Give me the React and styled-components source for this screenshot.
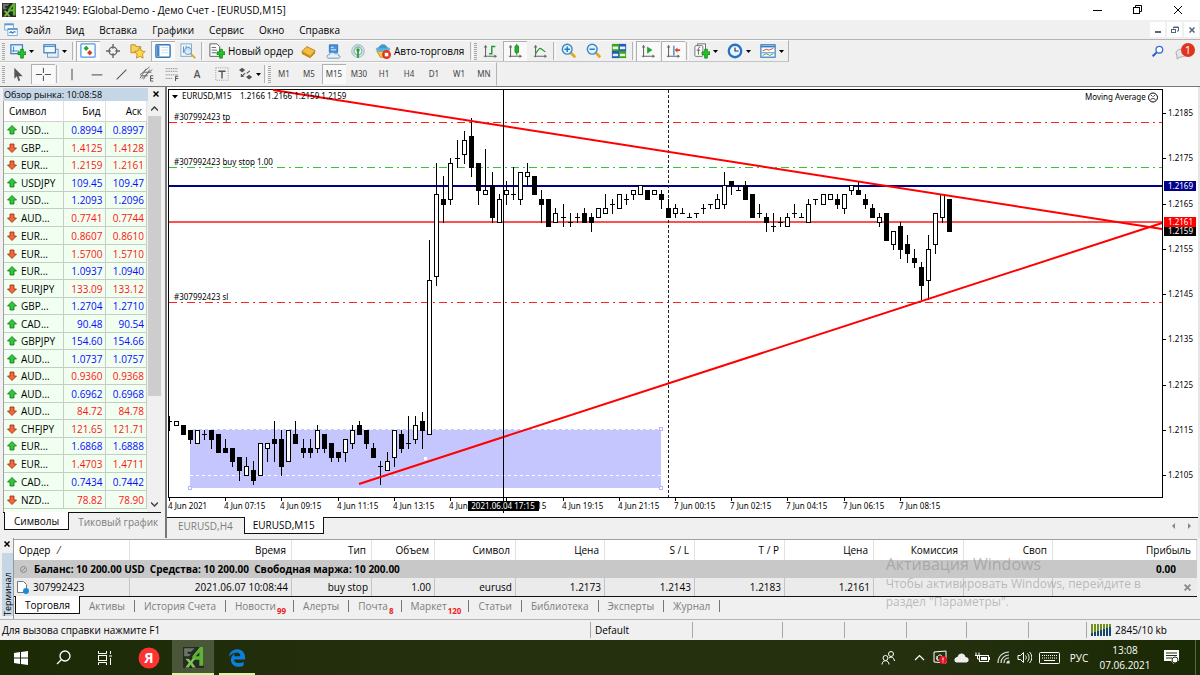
import React from 'react'
import styled, { createGlobalStyle, css } from 'styled-components'
import { FaEdgeLegacy } from 'react-icons/fa'

const GlobalStyle = createGlobalStyle`
  * { box-sizing: border-box; }
  body {
    margin: 0;
    background: #f0f0f0;
    color: #000;
    font-family: "Open Sans", "Noto Sans", sans-serif;
    font-size: 10px;
    line-height: 14px;
  }
  button {
    margin: 0;
    padding: 0;
    border: 0;
    background: none;
    color: inherit;
    font: inherit;
    white-space: nowrap;
  }
  svg { display: block; }
`

const Screen = styled.div`
  display: flex;
  flex-direction: column;
  min-height: 100vh;
`

/* ---------- title and menu ---------- */

const TitleBar = styled.header`
  display: flex;
  align-items: center;
  height: 20px;
  padding: 0 2px;
  background: #fff;
`

const Title = styled.h1`
  flex: 1;
  margin: 0 0 0 4px;
  font-size: 10px;
  font-weight: 400;
`

const WindowButton = styled.button`
  display: flex;
  align-items: center;
  justify-content: center;
  width: 40px;
  height: 20px;
`

const MenuBar = styled.nav`
  display: flex;
  align-items: center;
  gap: 7px;
  height: 20px;
  padding-left: 4px;
  border-bottom: 1px solid #b4b4b4;
`

const MenuItems = styled.div`
  display: flex;
  gap: 15px;
`

const MdiButtons = styled.div`
  display: flex;
  gap: 2px;
  margin-left: auto;
  padding-right: 1px;
`

const MdiButton = styled.button`
  display: flex;
  align-items: center;
  justify-content: center;
  width: 15px;
  height: 15px;
  background: #fff;
`

/* ---------- toolbars ---------- */

const ToolbarRow = styled.div`
  display: flex;
  align-items: stretch;
  height: ${props => props.$height}px;
`

const Tools = styled.div`
  display: flex;
  align-items: center;
  gap: 1px;
  padding-left: 2px;
  border-top: 1px solid #fbfbfb;
  border-right: 1px solid #b4b4b4;
  border-bottom: 1px solid ${props => (props.$last ? '#f0f0f0' : '#c4c4c4')};
`

const Grip = styled.span`
  width: 3px;
  height: 17px;
  background: repeating-linear-gradient(#a8a8a8 0 1px, #f0f0f0 1px 2px);
`

const Divider = styled.span`
  width: 3px;
  height: 18px;
  border-left: 1px solid #b4b4b4;
  border-right: 1px solid #fbfbfb;
`

const Tool = styled.button`
  display: flex;
  align-items: center;
  justify-content: ${props => (props.$start ? 'flex-start' : 'center')};
  gap: 3px;
  width: ${props => props.$width || 24}px;
  height: 20px;
  padding-left: ${props => (props.$start ? 4 : 0)}px;
  ${props => props.$pressed && css`
    background: #f9f9f9;
    box-shadow: inset 1px 1px #b0b0b0;
  `}
`

const TextTool = styled(Tool)`
  color: #555;
  font-weight: 600;
`

const Period = styled(Tool)`
  color: #444;
  font-family: "Noto Sans", sans-serif;
  font-size: 8px;
`

const ToolbarEnd = styled.div`
  display: flex;
  align-items: center;
  gap: 10px;
  margin-left: auto;
  padding-right: 4px;
`

/* ---------- workspace ---------- */

const Workspace = styled.main`
  display: flex;
  flex: 1;
  border-top: 1px solid #777;
`

const MarketWatch = styled.aside`
  display: flex;
  flex-direction: column;
  flex: none;
  width: 165px;
  padding: 0 4px 0 3px;
`

const PanelTitle = styled.div`
  display: flex;
  align-items: center;
  justify-content: space-between;
  height: 14px;
  padding-right: 2px;
`

const PanelName = styled.h2`
  width: 145px;
  margin: 0;
  padding-left: 1px;
  background: #c5d6e6;
  font-size: 9px;
  font-weight: 400;
  line-height: 13px;
`

const QuotesArea = styled.div`
  display: flex;
  flex: 1;
  border-left: 1px solid #a0a0a0;
  background: #f1fff1;
`

const Quotes = styled.table`
  flex: none;
  align-self: flex-start;
  width: 143px;
  table-layout: fixed;
  border-spacing: 0;
  background: #f1fff1;

  th {
    height: 21px;
    padding: 0 4px 0 5px;
    background: #fff;
    border-right: 1px solid #e2e2e2;
    border-bottom: 1px solid #d0d0d0;
    font-weight: 400;
    text-align: right;
  }
  th:first-child { width: 60px; text-align: left; }
  td {
    height: 17px;
    padding: 0 2px;
    border-right: 1px solid #c8ccc8;
    border-bottom: 1px solid #c8ccc8;
    line-height: 12px;
    text-align: right;
  }
  tbody tr:nth-child(even) td, tbody tr:nth-child(7n) td { height: 18px; }
`

const QuoteRow = styled.tr`
  color: ${props => (props.$up ? '#0a0aff' : '#ff1414')};
`

const SymbolCell = styled.div`
  display: flex;
  align-items: center;
  gap: 4px;
  padding-left: 1px;
  color: #000;
`

const ScrollBar = styled.div`
  display: flex;
  flex-direction: column;
  align-items: center;
  flex: 1;
  background: #f0f0f0;
`

const ScrollButton = styled.button`
  display: flex;
  align-items: center;
  justify-content: center;
  width: 13px;
  height: 15px;
`

const ScrollThumb = styled.div`
  width: 13px;
  height: 280px;
  margin-bottom: auto;
  background: #cdcdcd;
`

const TabRow = styled.div`
  display: flex;
  height: ${props => props.$height || 18}px;
  border-top: 1px solid #111;
`

const Tab = styled.button`
  height: 100%;
  padding: 0 ${props => props.$pad || 8}px;
  color: #7d7d7d;
  ${props => props.$active && css`
    margin-top: -1px;
    background: #fff;
    color: #000;
    border: 1px solid #111;
    border-top: 0;
    height: calc(100% + 1px);
  `}
`

const WatchTabs = styled(TabRow)`
  margin-bottom: 8px;
  padding-left: 1px;
`

const ChartPane = styled.section`
  flex: 1;
  min-width: 0;
  border-left: 2px solid #777;
  border-right: 2px solid #e6e6e6;
`

const ChartSvg = styled.svg`
  width: 100%;
  height: auto;
  background: #fff;
  font-family: "Noto Sans", sans-serif;
  font-size: 8px;
`

const TabScroll = styled.div`
  display: flex;
  align-items: center;
  gap: 12px;
  margin-left: auto;
  padding-right: 6px;
`

/* ---------- terminal ---------- */

const Terminal = styled.section`
  position: relative;
  display: flex;
  height: 82px;
  border-bottom: 1px solid #b4b4b4;
`

const TerminalSide = styled.div`
  display: flex;
  flex-direction: column;
  align-items: center;
  width: 13px;
  padding: 3px 0 3px 1px;
  gap: 6px;
`

const TerminalName = styled.h2`
  flex: 1;
  width: 11px;
  margin: 0;
  background: #c5d6e6;
  font-size: 9px;
  font-weight: 400;
  line-height: 11px;
  writing-mode: vertical-rl;
  transform: rotate(180deg);
  white-space: nowrap;
`

const TerminalBody = styled.div`
  flex: 1;
  min-width: 0;
  margin-right: 3px;
  padding-top: 1px;
  border-left: 1px solid #999;
`

const Orders = styled.table`
  width: 100%;
  table-layout: fixed;
  border-spacing: 0;
  border-top: 1px solid #a0a0a0;

  th {
    height: 20px;
    padding: 0 5px;
    background: #fff;
    border-right: 1px solid #e2e2e2;
    font-weight: 400;
    text-align: right;
  }
  th:first-child, td:first-child { text-align: left; }
  td {
    height: 18px;
    padding: 0 3px;
    background: #ebebeb;
    border-right: 1px solid #c4c4c4;
    text-align: right;
  }
  tr.balance td {
    background: #c8c8c8;
    border: 0;
    font-weight: 700;
  }
  tr.balance td:last-child { padding-right: 21px; }
  td:last-child { padding-right: 6px; border: 0; }
`

const OrderLabel = styled.div`
  display: flex;
  align-items: center;
  gap: ${props => props.$gap}px;
  padding-left: ${props => props.$indent || 0}px;
  white-space: pre;
`

const TerminalTabs = styled(TabRow)`
  align-items: center;
  padding-left: 1px;
`

const SplitTab = styled(Tab)`
  display: flex;
  align-items: center;
  height: 12px;
  border-right: 1px solid #777;
`

const Count = styled.span`
  align-self: flex-end;
  margin: 0 -2px -6px 1px;
  color: #f02020;
  font-size: 8px;
  font-weight: 700;
`

const Watermark = styled.div`
  position: absolute;
  top: 15px;
  right: 59px;
  color: rgba(140, 140, 140, 0.55);
  font-size: 12px;
  line-height: 18px;
  pointer-events: none;

  strong {
    display: block;
    font-size: 16px;
    font-weight: 400;
    line-height: 22px;
  }
`

const StatusBar = styled.footer`
  display: flex;
  align-items: center;
  height: 20px;
  padding-left: 1px;
`

const StatusCell = styled.div`
  display: flex;
  align-items: center;
  gap: 4px;
  flex: ${props => (props.$width ? 'none' : 1)};
  width: ${props => (props.$width ? props.$width + 'px' : 'auto')};
  height: 16px;
  padding-left: ${props => (props.$width ? 4 : 1)}px;
  border-left: ${props => (props.$width ? '1px solid #a8a8a8' : '0')};
`

/* ---------- taskbar ---------- */

const TaskBar = styled.footer`
  display: flex;
  height: 35px;
  background: linear-gradient(90deg, #1c2a06, #25300f 40%, #25300f 75%, #1a2a04);
  color: #fff;
`

const TaskButton = styled.button`
  display: flex;
  align-items: center;
  justify-content: center;
  width: ${props => props.$width}px;
  ${props => props.$active && css`background: #4a5638;`}
`

// a running program has a light line below its icon
const RunningButton = styled(TaskButton)`
  padding-top: 2px;
  margin: 0 ${props => props.$gap || 0}px;
  border-bottom: 2px solid #dcf3a0;
`

const Tray = styled.div`
  display: flex;
  margin-left: auto;
  padding-right: 8px;
  border-right: 1px solid #5b6548;
  margin-right: 4px;
`

const Clock = styled.time`
  display: flex;
  flex-direction: column;
  justify-content: center;
  width: 60px;
  line-height: 15px;
  text-align: center;
`

/* ---------- icons ---------- */

const Icon = ({ size = 16, children }) => (
  <svg width={size} height={size} viewBox="0 0 18 18" fill="none" aria-hidden="true">{children}</svg>
)

const Logo = ({ size }) => (
  <Icon size={size}>
    <rect width="18" height="18" fill="#262a22" />
    <path d="M1 1h9L7 4H4v2h3L5 8H1z" fill="#6d7568" />
    <path d="M17.500 0h-3L8 8v3h6v5h3.500zM14 4.500V8h-3z" fill="#5fb236" fillRule="evenodd" />
    <path d="M2 10h3l1.500 2L8 10h2.500L8 13.500l3 4H8L6.500 15 5 17.500H2l3-4z" fill="#7cc451" />
  </Icon>
)

const Plus = () => <path d="M12 7h3v3h3v3h-3v4h-3v-4H9v-3h3z" fill="#23c52a" stroke="#128a18" />

const Axes = () => (
  <>
    <path d="M4 4v12M2 15h13" stroke="#666" strokeWidth="1.200" />
    <path d="M4 2l2 3H2zM17 15l-3-2v4z" fill="#666" />
  </>
)

const Lens = ({ minus }) => (
  <Icon>
    <path d="M11 11l5 5" stroke="#e0a721" strokeWidth="3" />
    <circle cx="7" cy="7" r="5.500" fill="#dff2ff" stroke="#3c87c8" strokeWidth="1.6" />
    <path d={minus ? 'M4 7h6' : 'M4 7h6M7 4v6'} stroke="#2476b8" strokeWidth="1.6" />
  </Icon>
)

const icons = {
  mdi: <Icon size={14}><rect x="1" y="1" width="11" height="8" fill="#fff" stroke="#5c9ad2" /><path d="M1 2h11" stroke="#5c9ad2" strokeWidth="2" /><rect x="5" y="7" width="12" height="9" fill="#fff" stroke="#5c9ad2" /><path d="M5 8h12M7 13l2-2 2 2 2-2 2 1" stroke="#3379bb" strokeWidth="1.4" /></Icon>,
  newChart: <Icon><rect x="1" y="2" width="13" height="10" fill="#e8f4ff" stroke="#3b82c1" strokeWidth="1.4" /><path d="M4 4v6M2 9h8" stroke="#3b82c1" /><Plus /></Icon>,
  profiles: <Icon><rect x="5" y="7" width="12" height="9" fill="#e8f1fa" stroke="#6c94b8" /><rect x="1" y="2" width="13" height="9" fill="#f3faff" stroke="#3b82c1" strokeWidth="1.4" /><path d="M1 4h13" stroke="#3b82c1" /></Icon>,
  watch: <Icon><rect x="1" y="1" width="16" height="15" rx="1" fill="#fff" stroke="#4a9ae0" strokeWidth="1.4" /><path d="M7 3l3 3-3 3-3-3z" fill="#24a52c" /><path d="M11 8l3 3-3 3-3-3z" fill="#e03a20" /></Icon>,
  cross: <Icon size={14}><circle cx="9" cy="9" r="5" stroke="#666" strokeWidth="1.8" /><path d="M9 0v6M9 12v6M0 9h6M12 9h6" stroke="#666" strokeWidth="1.8" /></Icon>,
  navigator: <Icon><path d="M1 2h5l1 2h5v7H1z" fill="#f4cf62" stroke="#bb8b1e" /><path d="M11 5l2 4 4 .5-3 3 .8 4.500-3.800-2-3.800 2 .8-4.500-3-3 4-.5z" fill="#ffd84a" stroke="#c48b15" /></Icon>,
  terminal: <Icon><rect x="1" y="2" width="16" height="14" rx="1" fill="#fff" stroke="#3379bb" strokeWidth="1.6" /><rect x="2" y="3" width="3" height="12" fill="#4687c7" /><path d="M7 5h8M7 8h8M7 11h8" stroke="#c5d8ea" /></Icon>,
  tester: <Icon><rect x="1" y="1" width="12" height="14" fill="#eef6fc" stroke="#7ba5c9" /><path d="M4 4v7M7 3v6M10 4v5" stroke="#477caf" /><circle cx="9" cy="9" r="4" fill="#cfe9fb" fillOpacity=".8" stroke="#5c98c8" /><path d="M12 12l5 5" stroke="#d9a126" strokeWidth="2" /></Icon>,
  order: <Icon><path d="M1 1h8l3 3v11H1z" fill="#fff" stroke="#555" /><path d="M3 5h5M3 8h6M3 11h5" stroke="#555" /><Plus /></Icon>,
  book: <Icon size={15}><path d="M1 9l6-6 10 5-6 7z" fill="#f2bd3f" stroke="#a97412" /><path d="M1 9v3l10 5 6-6V8l-6 7z" fill="#c98a1c" /></Icon>,
  server: <Icon size={15}><path d="M4 1h10v9H4z" fill="#4a95e0" stroke="#2868b0" /><path d="M6 4h3M6 7h6" stroke="#fff" /><path d="M3 17c-3 0-2-5 1-4 1-4 6-3 7-1 3-1 5 1 4 2 3 0 2 3 0 3z" fill="#e6f0fa" stroke="#5c8ab8" /></Icon>,
  signal: <Icon size={16}><circle cx="9" cy="9" r="7" stroke="#a9c3d4" strokeWidth="1.5" /><circle cx="9" cy="9" r="4.500" stroke="#7fb9a0" strokeWidth="1.5" /><circle cx="9" cy="8" r="2" fill="#2d9b45" /><path d="M9 8v9" stroke="#2d9b45" strokeWidth="2" /></Icon>,
  auto: <Icon><path d="M2 9h14l-4 7H6z" fill="#f4c847" stroke="#bb8b1e" /><ellipse cx="9" cy="7" rx="8" ry="3" fill="#5cb0e0" /><path d="M4 6c1-6 9-6 10 0z" fill="#4397cf" /><circle cx="13" cy="13" r="5" fill="#e4341d" /><rect x="11" y="11" width="4" height="4" fill="#fff" /></Icon>,
  bars: <Icon><Axes /><path d="M8 12h3V4h4M11 4v9" stroke="#1c9b28" strokeWidth="1.600" /></Icon>,
  candles: <Icon><Axes /><path d="M11 1v13" stroke="#128a18" /><rect x="9" y="3" width="4" height="8" rx="1" fill="#20b52c" stroke="#128a18" /></Icon>,
  line: <Icon><Axes /><path d="M4 12c4-6 5-7 7-5l4 3" stroke="#1c9b28" strokeWidth="1.3" /></Icon>,
  tile: <Icon><rect x="1" y="1" width="8" height="8" fill="#3ca51c" /><rect x="9" y="1" width="8" height="8" fill="#2259c2" /><rect x="1" y="9" width="8" height="8" fill="#2259c2" /><rect x="9" y="9" width="8" height="8" fill="#3ca51c" /><path d="M2 4h6v3H2zM10 4h6v3h-6zM2 12h6v3H2zM10 12h6v3h-6z" fill="#e4f3df" /></Icon>,
  scroll: <Icon><Axes /><path d="M8 4l6 4-6 4z" fill="#20a52c" /></Icon>,
  shift: <Icon><Axes /><path d="M10 3v11" stroke="#3379bb" strokeWidth="1.4" /><path d="M11 8l3-3v2h3v2h-3v2z" fill="#d84120" /></Icon>,
  indicators: <Icon><rect x="4" y="1" width="9" height="11" fill="#fff" stroke="#666" /><rect x="1" y="3" width="9" height="12" rx="1" fill="#fff" stroke="#666" /><path d="M7 5c-3-1-2 3-2 8M3 8h4" stroke="#555" /><Plus /></Icon>,
  clock: <Icon><circle cx="9" cy="9" r="7" fill="#e8f4ff" stroke="#2672c4" strokeWidth="2.6" /><path d="M9 5v4h4" stroke="#335" strokeWidth="1.3" /></Icon>,
  template: <Icon><rect x="1" y="2" width="16" height="14" fill="#fff" stroke="#3b82c1" strokeWidth="1.4" /><path d="M1 4h16" stroke="#3b82c1" strokeWidth="2" /><path d="M3 9l4-2 3 1 5-2" stroke="#c24430" /><path d="M2 11h14" stroke="#3b82c1" /><path d="M3 14l4-2 4 2 4-2" stroke="#3a9a48" /></Icon>,
  find: <Icon size={12}><path d="M7 11l-6 6" stroke="#2c59c4" strokeWidth="3" /><circle cx="11" cy="7" r="5" stroke="#3b6cd6" strokeWidth="2" fill="#fff" /></Icon>,
  cursor: <Icon size={15}><path d="M4 1v13l3-3 2 6 2-1-2-5h5z" fill="#555" /></Icon>,
  crosshair: <Icon><path d="M9.500 2v6M9.500 11v6M1 9.500h7M11 9.500h7" stroke="#555" strokeWidth="1.200" /></Icon>,
  vline: <Icon><path d="M9 3v13" stroke="#555" strokeWidth="1.200" /></Icon>,
  hline: <Icon><path d="M3 10h12" stroke="#555" strokeWidth="1.200" /></Icon>,
  trend: <Icon><path d="M3 15L14 4" stroke="#555" strokeWidth="1.200" /></Icon>,
  channel: <Icon><path d="M1 10L12 1M3 14L15 4M1 14L8 3M5 15l7-11M2 11h8M5 7h9" stroke="#666" /><path d="M16 11h-3v6h3M13 14h3" stroke="#444" /></Icon>,
  fibo: <Icon><path d="M2 3h13M2 6h13M2 10h13M2 14h8" stroke="#666" strokeDasharray="1 1" /><path d="M16 11.500h-3V17M13 14h3" stroke="#444" /></Icon>,
  label: <Icon><rect x="2" y="2" width="14" height="14" stroke="#888" strokeDasharray="1 1.500" /><path d="M5 6h8M9 6v8" stroke="#555" strokeWidth="1.600" /></Icon>,
  arrows: <Icon size={14}><path d="M0 4l4-3 4 3-4 3zM9 13l4-3 4 3-4 3z" fill="#555" /><path d="M3 12l5-4M3 9v3h3M10 8l4-3" stroke="#555" strokeWidth="1.400" /></Icon>,
  minimize: <svg width="10" height="10"><path d="M0 5.500h9" stroke="#000" /></svg>,
  restore: <svg width="10" height="10" fill="none" stroke="#000"><rect x=".5" y="2.500" width="6" height="6" /><path d="M2.500 2V.5h6v6H7" /></svg>,
  close: <svg width="10" height="10"><path d="M1 1l8 8M9 1l-8 8" stroke="#000" /></svg>,
}

const Caret = () => <svg width="5" height="3" aria-hidden="true"><path d="M0 0h5L2.500 3z" fill="#000" /></svg>
const SmallX = ({ color = '#000', size = 6 }) => (
  <svg width={size} height={size} viewBox="0 0 6 6" aria-hidden="true"><path d="M.5.5l5 5M5.500.5l-5 5" stroke={color} strokeWidth="1.5" /></svg>
)

const Direction = ({ up }) => (
  <svg width="10" height="10" viewBox="0 0 10 10" aria-hidden="true">
    {up
      ? <path d="M5 .5L9.500 5H7v4H3V5H.5z" fill="#2fc63a" stroke="#14701b" strokeWidth=".8" />
      : <path d="M5 9.500L9.500 5H7V1H3v4H.5z" fill="#f2683c" stroke="#9c2a0e" strokeWidth=".8" />}
  </svg>
)

/* ---------- data ---------- */

const menu = ['Файл', 'Вид', 'Вставка', 'Графики', 'Сервис', 'Окно', 'Справка']
const periods = ['M1', 'M5', 'M15', 'M30', 'H1', 'H4', 'D1', 'W1', 'MN']

const quotes = [
  ['USD...', '0.8994', '0.8997', 1],
  ['GBP...', '1.4125', '1.4128', 0],
  ['EUR...', '1.2159', '1.2161', 0],
  ['USDJPY', '109.45', '109.47', 1],
  ['USD...', '1.2093', '1.2096', 1],
  ['AUD...', '0.7741', '0.7744', 0],
  ['EUR...', '0.8607', '0.8610', 0],
  ['EUR...', '1.5700', '1.5710', 0],
  ['EUR...', '1.0937', '1.0940', 1],
  ['EURJPY', '133.09', '133.12', 0],
  ['GBP...', '1.2704', '1.2710', 1],
  ['CAD...', '90.48', '90.54', 1],
  ['GBPJPY', '154.60', '154.66', 1],
  ['AUD...', '1.0737', '1.0757', 1],
  ['AUD...', '0.9360', '0.9368', 0],
  ['AUD...', '0.6962', '0.6968', 1],
  ['AUD...', '84.72', '84.78', 0],
  ['CHFJPY', '121.65', '121.71', 0],
  ['EUR...', '1.6868', '1.6888', 1],
  ['EUR...', '1.4703', '1.4711', 0],
  ['CAD...', '0.7434', '0.7442', 1],
  ['NZD...', '78.82', '78.90', 0],
]

// open, high, low, close in pips above 1.2100
const candles = [
  [17, 18, 15, 17], [16, 17, 16, 17], [16, 16, 14, 14], [15, 15, 12, 13], [12, 15, 12, 15], [14, 15, 13, 14],
  [15, 15, 11, 13], [14, 14, 10, 10], [11, 13, 10, 10], [11, 11, 7, 8], [9, 9, 4, 6], [5, 9, 5, 7],
  [6, 8, 3, 4], [5, 12, 5, 12], [11, 12, 8, 12], [13, 17, 8, 12], [13, 15, 5, 7], [8, 15, 8, 15],
  [14, 17, 12, 12], [11, 13, 9, 10], [11, 13, 9, 10], [11, 16, 10, 15], [14, 14, 10, 11], [12, 12, 8, 9],
  [10, 10, 8, 9], [10, 13, 8, 13], [12, 16, 11, 15], [16, 17, 14, 14], [15, 15, 11, 12], [11, 12, 9, 9],
  [7, 8, 3, 7], [6, 10, 6, 8], [9, 15, 7, 15], [14, 15, 10, 11], [12, 18, 11, 12], [13, 18, 12, 16],
  [17, 19, 11, 15], [14, 57, 14, 48], [49, 74, 47, 67], [66, 71, 61, 65], [66, 75, 65, 74], [75, 79, 73, 75],
  [76, 81, 74, 79], [80, 84, 71, 73], [74, 74, 65, 68], [67, 77, 67, 68], [69, 72, 61, 62], [61, 67, 61, 66],
  [67, 70, 65, 68], [67, 73, 66, 67], [66, 72, 65, 72], [71, 74, 69, 72], [71, 71, 67, 67], [66, 68, 61, 65],
  [66, 66, 60, 60], [61, 64, 61, 63], [62, 65, 60, 62], [61, 63, 60, 61], [62, 63, 61, 62], [63, 64, 61, 61],
  [62, 63, 59, 61], [62, 64, 62, 64], [63, 67, 63, 64], [65, 66, 63, 65], [64, 67, 64, 67], [66, 67, 65, 66],
  [67, 68, 66, 68], [67, 69, 67, 69], [68, 68, 66, 66], [67, 68, 67, 68], [67, 68, 64, 66], [64, 66, 62, 62],
  [63, 65, 62, 64], [63, 64, 63, 63], [62, 63, 62, 62], [63, 63, 62, 63], [64, 65, 63, 64], [65, 65, 64, 65],
  [64, 67, 64, 66], [65, 72, 64, 69], [70, 70, 67, 69], [68, 69, 68, 68], [69, 70, 66, 66], [67, 67, 62, 62],
  [63, 65, 62, 63], [62, 63, 59, 61], [60, 63, 59, 60], [61, 62, 60, 61], [60, 63, 60, 62], [63, 65, 62, 63],
  [62, 63, 62, 62], [61, 66, 61, 65], [66, 66, 65, 66], [65, 67, 65, 67], [66, 67, 66, 67], [66, 67, 64, 65],
  [64, 67, 63, 67], [68, 69, 67, 69], [68, 70, 67, 67], [66, 67, 64, 65], [64, 65, 62, 62], [61, 63, 60, 62],
  [63, 63, 57, 57], [56, 59, 55, 59], [60, 61, 53, 55], [56, 58, 52, 54], [53, 55, 51, 52], [51, 52, 44, 47],
  [48, 58, 44, 55], [56, 63, 54, 63], [62, 67, 61, 67], [66, 66, 59, 59],
]

const times = ['4 Jun 2021', '4 Jun 07:15', '4 Jun 09:15', '4 Jun 11:15', '4 Jun 13:15', '4 Jun 15:15', '4 Jun 17:15',
  '4 Jun 19:15', '4 Jun 21:15', '7 Jun 00:15', '7 Jun 02:15', '7 Jun 04:15', '7 Jun 06:15', '7 Jun 08:15']

const levels = [85, 75, 65, 55, 45, 35, 25, 15, 5]

const columns = [
  ['Ордер', 116, '307992423'], ['Время', 162, '2021.06.07 10:08:44'], ['Тип', 80, 'buy stop'],
  ['Объем', 63, '1.00'], ['Символ', 81, 'eurusd'], ['Цена', 89, '1.2173'], ['S / L', 90, '1.2143'],
  ['T / P', 90, '1.2183'], ['Цена', 89, '1.2161'], ['Комиссия', 90, ''], ['Своп', 89, ''], ['Прибыль', 0, ''],
]

const terminalTabs = [['Активы'], ['История Счета'], ['Новости', 99], ['Алерты'], ['Почта', 8], ['Маркет', 120],
  ['Статьи'], ['Библиотека'], ['Эксперты'], ['Журнал']]

const candleX = i => Math.round(169 + i * 7.027)
const priceY = pips => Math.round(475 - (pips - 5) * 4.525)

/* ---------- chart ---------- */

function Candle({ index, data }) {
  const [open, high, low, close] = data
  const x = candleX(index)
  const top = priceY(Math.max(open, close))
  const height = priceY(Math.min(open, close)) - top
  const left = index === 0 ? 0 : 2
  return (
    <g>
      <path d={`M${x + 0.5} ${priceY(high)}V${priceY(low) + 1}`} stroke="#000" />
      {height === 0
        ? <path d={`M${x - left} ${top + 0.5}h${left + 3}`} stroke="#000" />
        : <rect x={x - 1.5} y={top + 0.5} width="4" height={height} fill={close > open ? '#fff' : '#000'} stroke="#000" />}
    </g>
  )
}

function PriceTag({ y, color, children }) {
  return (
    <g>
      <rect x="1164" y={y - 5} width="32" height="10" fill={color} />
      <text x="1168" y={y + 3} fill="#fff">{children}</text>
    </g>
  )
}

function Chart() {
  return (
    <ChartSvg viewBox="167 87 1031 430" role="img" aria-label="EURUSD,M15">
      <rect x="168.5" y="89.5" width="994" height="408" fill="#fff" stroke="#000" />
      <rect x="190" y="429" width="471" height="59" fill="#c6c6ff" />
      <path d="M190 429.500h471M190 475.500h471" stroke="#fff" strokeDasharray="3 3" />
      <g fill="none">
        <path d="M169 122.500h993M169 302.500h993" stroke="#ff2020" strokeDasharray="8 4 2 4" />
        <path d="M169 167.500h993" stroke="#35c435" strokeDasharray="8 4 2 4" />
        <path d="M169 186h993" stroke="#00008b" strokeWidth="2" />
        <path d="M169 222h993" stroke="#ff5050" strokeWidth="2" />
        <path d="M668.500 90v407" stroke="#222" strokeWidth="1" strokeDasharray="3 2" />
      </g>
      {candles.map((data, i) => <Candle key={i} index={i} data={data} />)}
      <path d="M273 90L1162 229M359 484L1162 223" stroke="#f00" strokeWidth="2" fill="none" />
      <g fill="#fff" stroke="#b4b4ff">
        <rect x="188.500" y="486.500" width="3" height="3" />
        <rect x="659.500" y="427.500" width="3" height="3" />
        <rect x="659.500" y="486.500" width="3" height="3" />
        <rect x="424.500" y="457.500" width="2" height="2" stroke="#fff" />
      </g>

      <path d="M172 95h6l-3 3.500z" />
      <text x="182" y="99">EURUSD,M15</text>
      <text x="240" y="99">1.2166 1.2166 1.2159 1.2159</text>
      <text x="1085" y="100">Moving Average</text>
      <g fill="none" stroke="#000">
        <circle cx="1153" cy="97.500" r="4.500" />
        <path d="M1151 95l1.500 1.500M1155 95l-1.500 1.500M1150.500 100c1-2 4-2 5 0" strokeWidth=".8" />
      </g>
      <text x="174" y="120">#307992423 tp</text>
      <text x="174" y="165">#307992423 buy stop 1.00</text>
      <text x="174" y="300">#307992423 sl</text>

      {levels.map(level => (
        <g key={level}>
          <path d={`M1163 ${priceY(level) + 0.5}h3`} stroke="#000" />
          <text x="1168" y={priceY(level) + 3}>{(1.21 + level / 10000).toFixed(4)}</text>
        </g>
      ))}
      {times.map((time, i) => (
        <g key={time}>
          <path d={`M${candleX(i * 8) + 0.5} 498v3`} stroke="#000" />
          <text x={candleX(i * 8) - 1} y="509">{time}</text>
        </g>
      ))}
      <PriceTag y={186} color="#00008b">1.2169</PriceTag>
      <PriceTag y={231} color="#000">1.2159</PriceTag>
      <PriceTag y={222} color="#f00">1.2161</PriceTag>
      <path d="M503.500 90v423" stroke="#000" />
      <rect x="468" y="501" width="71" height="10" />
      <text x="503" y="509" fill="#fff" textAnchor="middle">2021.06.04 17:15</text>
    </ChartSvg>
  )
}

const ToolWithMenu = ({ width = 32, label, children }) => (
  <Tool $start $width={width} aria-label={label}>{children}<Caret /></Tool>
)

function Toolbars() {
  return (
    <>
      <ToolbarRow $height={22}>
        <Tools>
          <Grip />
          <ToolWithMenu label="Новый график">{icons.newChart}</ToolWithMenu>
          <ToolWithMenu label="Профили">{icons.profiles}</ToolWithMenu>
          <Divider />
          <Tool $pressed aria-label="Обзор рынка">{icons.watch}</Tool>
          <Tool aria-label="Окно данных">{icons.cross}</Tool>
          <Tool aria-label="Навигатор">{icons.navigator}</Tool>
          <Tool $pressed aria-label="Терминал">{icons.terminal}</Tool>
          <Tool aria-label="Тестер стратегий">{icons.tester}</Tool>
          <Divider />
          <Tool $start $width={90}>{icons.order}Новый ордер</Tool>
          <Tool aria-label="Редактор">{icons.book}</Tool>
          <Tool aria-label="Сервер">{icons.server}</Tool>
          <Tool aria-label="Сигналы">{icons.signal}</Tool>
          <Tool $start $width={98}>{icons.auto}Авто-торговля</Tool>
          <Divider />
          <Grip />
          <Tool aria-label="Бары">{icons.bars}</Tool>
          <Tool $pressed aria-label="Свечи">{icons.candles}</Tool>
          <Tool aria-label="Линия">{icons.line}</Tool>
          <Divider />
          <Tool aria-label="Увеличить"><Lens /></Tool>
          <Tool aria-label="Уменьшить"><Lens minus /></Tool>
          <Tool aria-label="Окна мозаикой">{icons.tile}</Tool>
          <Divider />
          <Tool $pressed aria-label="Автопрокрутка">{icons.scroll}</Tool>
          <Tool $pressed aria-label="Сдвиг графика">{icons.shift}</Tool>
          <Divider />
          <ToolWithMenu label="Индикаторы">{icons.indicators}</ToolWithMenu>
          <ToolWithMenu label="Периоды">{icons.clock}</ToolWithMenu>
          <ToolWithMenu label="Шаблоны">{icons.template}</ToolWithMenu>
        </Tools>
        <ToolbarEnd>
          <button aria-label="Поиск">{icons.find}</button>
          <button aria-label="Уведомления">
            <svg width="22" height="20" viewBox="0 0 22 20">
              <path d="M2 12c0-5 10-5 11-1 0 4-4 5-7 5l-3 2v-3z" fill="#e5e5e5" stroke="#aaa" />
              <circle cx="14" cy="9" r="7" fill="#e03420" />
              <text x="14" y="13" textAnchor="middle" fontSize="11" fill="#fff">1</text>
            </svg>
          </button>
        </ToolbarEnd>
      </ToolbarRow>
      <ToolbarRow $height={24}>
        <Tools $last>
          <Grip />
          <Tool aria-label="Курсор">{icons.cursor}</Tool>
          <Tool $pressed aria-label="Перекрестие">{icons.crosshair}</Tool>
          <Divider />
          <Tool aria-label="Вертикальная линия">{icons.vline}</Tool>
          <Tool aria-label="Горизонтальная линия">{icons.hline}</Tool>
          <Tool aria-label="Трендовая линия">{icons.trend}</Tool>
          <Tool aria-label="Канал">{icons.channel}</Tool>
          <Tool aria-label="Фибоначчи">{icons.fibo}</Tool>
          <TextTool aria-label="Текст">A</TextTool>
          <Tool aria-label="Метка">{icons.label}</Tool>
          <ToolWithMenu width={28} label="Стрелки">{icons.arrows}</ToolWithMenu>
          <Divider />
          <Grip />
          {periods.map(name => <Period key={name} $pressed={name === 'M15'}>{name}</Period>)}
        </Tools>
      </ToolbarRow>
    </>
  )
}

function MarketWatchPanel() {
  return (
    <MarketWatch>
      <PanelTitle>
        <PanelName>Обзор рынка: 10:08:58</PanelName>
        <button aria-label="Закрыть"><SmallX /></button>
      </PanelTitle>
      <QuotesArea>
        <Quotes>
          <thead>
            <tr><th>Символ</th><th>Бид</th><th>Аск</th></tr>
          </thead>
          <tbody>
            {quotes.map(([symbol, bid, ask, up], i) => (
              <QuoteRow key={i} $up={up}>
                <td><SymbolCell><Direction up={up} />{symbol}</SymbolCell></td>
                <td>{bid}</td>
                <td>{ask}</td>
              </QuoteRow>
            ))}
          </tbody>
        </Quotes>
        <ScrollBar>
          <ScrollButton aria-label="Вверх"><svg width="7" height="5"><path d="M0 4.500l3.500-3.500L7 4.500" fill="none" stroke="#444" strokeWidth="1.5" /></svg></ScrollButton>
          <ScrollThumb />
          <ScrollButton aria-label="Вниз"><svg width="7" height="5"><path d="M0 .5L3.500 4 7 .5" fill="none" stroke="#444" strokeWidth="1.5" /></svg></ScrollButton>
        </ScrollBar>
      </QuotesArea>
      <WatchTabs>
        <Tab $active $pad={9}>Символы</Tab>
        <Tab $pad={9}>Тиковый график</Tab>
      </WatchTabs>
    </MarketWatch>
  )
}

function TerminalPanel() {
  return (
    <Terminal>
      <TerminalSide>
        <button aria-label="Закрыть"><SmallX /></button>
        <TerminalName>Терминал</TerminalName>
      </TerminalSide>
      <TerminalBody>
        <Orders>
          <colgroup>
            {columns.map(([, width], i) => <col key={i} width={width || undefined} />)}
          </colgroup>
          <thead>
            <tr>{columns.map(([name], i) => <th key={i}>{name}{i === 0 && <>&nbsp;&nbsp; ⁄</>}</th>)}</tr>
          </thead>
          <tbody>
            <tr className="balance">
              <td colSpan="11">
                <OrderLabel $gap={7} $indent={3}>
                  <svg width="7" height="7"><circle cx="3.500" cy="3.500" r="3" fill="none" stroke="#888" /><path d="M2 5l3-3" stroke="#888" /></svg>
                  {'Баланс: 10 200.00 USD  Средства: 10 200.00  Свободная маржа: 10 200.00'}
                </OrderLabel>
              </td>
              <td>0.00</td>
            </tr>
            <tr>
              {columns.map(([, , value], i) => (
                <td key={i}>
                  {i === 0 && (
                    <OrderLabel $gap={4}>
                      <svg width="12" height="13"><path d="M.5.5h6l3 3v8h-9z" fill="#fff" stroke="#777" /><circle cx="9" cy="10" r="3" fill="#1b8bd8" /></svg>
                      {value}
                    </OrderLabel>
                  )}
                  {i > 0 && i < 11 && value}
                  {i === 11 && <button aria-label="Закрыть ордер"><SmallX color="#888" size={7} /></button>}
                </td>
              ))}
            </tr>
          </tbody>
        </Orders>
        <TerminalTabs>
          <Tab $active $pad={9}>Торговля</Tab>
          {terminalTabs.map(([name, count]) => (
            <SplitTab key={name} $pad={9}>{name}{count && <Count>{count}</Count>}</SplitTab>
          ))}
        </TerminalTabs>
      </TerminalBody>
      <Watermark>
        <strong>Активация Windows</strong>
        Чтобы активировать Windows, перейдите в<br />
        раздел "Параметры".
      </Watermark>
    </Terminal>
  )
}

function Status() {
  return (
    <StatusBar>
      <StatusCell>Для вызова справки нажмите F1</StatusCell>
      <StatusCell $width={102}>Default</StatusCell>
      {[90, 62, 62, 60, 62, 58].map((width, i) => <StatusCell key={i} $width={width} />)}
      <StatusCell $width={114}>
        <svg width="20" height="12">
          {[0, 1, 2, 3, 4, 5, 6].map(i => (
            <g key={i}>
              <rect x={i * 3} y="0" width="2" height="12" fill="#6f8f1f" />
              <rect x={i * 3} y={9 - i} width="2" height={3 + i} fill="#17466e" />
            </g>
          ))}
        </svg>
        2845/10 kb
      </StatusCell>
    </StatusBar>
  )
}

function WindowsTaskBar() {
  return (
    <TaskBar>
      <TaskButton $width={42} aria-label="Пуск">
        <svg width="14" height="14"><path d="M0 2l6-1v5.500H0zM7 1l7-1v6.500H7zM0 7.500h6V13l-6-1zM7 7.500h7V14l-7-1z" fill="#fff" /></svg>
      </TaskButton>
      <TaskButton $width={42} aria-label="Поиск">
        <svg width="15" height="15" fill="none" stroke="#fff" strokeWidth="1.3"><circle cx="9" cy="6" r="5" /><path d="M5.500 9.500L1 14" /></svg>
      </TaskButton>
      <TaskButton $width={42} aria-label="Представление задач">
        <svg width="16" height="14" fill="none" stroke="#fff"><rect x="1.500" y="4.500" width="8" height="5" /><path d="M1.500 0v2.500h8V0M1.500 14v-2.500h8V14M13.500 0v3M13.500 7v7M12 5h3" /></svg>
      </TaskButton>
      <TaskButton $width={46} aria-label="Яндекс">
        <svg width="22" height="22"><circle cx="11" cy="11" r="10.500" fill="#ff3333" /><text x="11" y="16" textAnchor="middle" fontSize="14" fontWeight="700" fill="#fff">Я</text></svg>
      </TaskButton>
      <RunningButton $width={42} $active aria-label="MetaTrader 4"><Logo size={21} /></RunningButton>
      <RunningButton $width={36} $gap={5} aria-label="Edge"><FaEdgeLegacy size={18} color="#0b7fdc" /></RunningButton>
      <Tray>
        <TaskButton $width={42} aria-label="Люди">
          <svg width="14" height="14" fill="none" stroke="#fff"><circle cx="10" cy="3" r="2.500" /><circle cx="4.500" cy="7" r="2.500" /><path d="M1 13.500c0-5 7-5 7 0M8 7c3-2 5 0 5.500 3" /></svg>
        </TaskButton>
        <TaskButton $width={21} aria-label="Скрытые значки">
          <svg width="11" height="7"><path d="M1 6l4.500-4.500L10 6" stroke="#fff" fill="none" strokeWidth="1.2" /></svg>
        </TaskButton>
        <TaskButton $width={21} aria-label="Защита">
          <svg width="15" height="15"><path d="M1 2l12-1v12L1 12zM4 9c0-5 5-5 5-2M4 6v4h3" fill="none" stroke="#fff" /><circle cx="10" cy="10" r="4" fill="#e81123" /><path d="M10 7.500v3M10 11.500v1" stroke="#fff" /></svg>
        </TaskButton>
        <TaskButton $width={21} aria-label="OneDrive">
          <svg width="15" height="10"><path d="M3 9.500C-1 9 0 4 3.500 4 5-1 11 0 11.500 4c4 0 4 5 1 5.500z" fill="#eee" /></svg>
        </TaskButton>
        <TaskButton $width={21} aria-label="Батарея">
          <svg width="15" height="12" fill="none" stroke="#fff"><rect x="4.500" y="3.500" width="9" height="6" /><path d="M6 5h6v3H6z" fill="#fff" stroke="none" /><path d="M14.500 5v3M1 .5v3h3v-3M2.500 4v3H4M0 3.500h5" /></svg>
        </TaskButton>
        <TaskButton $width={21} aria-label="Сеть">
          <svg width="13" height="13" fill="none" stroke="#ddd" strokeWidth="1.200"><path d="M1 12C1 5 6 1 12 1M4 12c0-5 4-8 8-8M7 12c0-3 2-5 5-5" /><path d="M10 12c0-1 1-2 2-2v2z" fill="#fff" /></svg>
        </TaskButton>
        <TaskButton $width={21} aria-label="Звук">
          <svg width="15" height="13" fill="none" stroke="#fff"><path d="M1 4.500h2.500l3-3v10l-3-3H1zM8.500 4.500c1 1 1 3 0 4M10.500 2.500c2 2 2 6 0 8M12.500 1c3 3 3 8 0 11" /></svg>
        </TaskButton>
        <TaskButton $width={28} aria-label="Клавиатура">
          <svg width="21" height="12" fill="none" stroke="#fff"><rect x=".5" y=".5" width="20" height="11" rx="1" /><path d="M3 3.500h15M3 6h15" strokeDasharray="1 1" /><path d="M5 8.500h11" /></svg>
        </TaskButton>
        <TaskButton $width={32}>РУС</TaskButton>
        <Clock><span>13:08</span><span>07.06.2021</span></Clock>
        <TaskButton $width={32} aria-label="Уведомления">
          <svg width="15" height="15"><path d="M0 0h15v11h-5v3l-3-3H0z" fill="#fff" /><path d="M2 3h11M2 5.500h11M2 8h6" stroke="#25300f" /><circle cx="11" cy="10" r="3" fill="#fff" stroke="#25300f" /></svg>
        </TaskButton>
      </Tray>
    </TaskBar>
  )
}

export default function App() {
  return (
    <Screen>
      <GlobalStyle />
      <TitleBar>
        <Logo size={14} />
        <Title>1235421949: EGlobal-Demo - Демо Счет - [EURUSD,M15]</Title>
        <WindowButton aria-label="Свернуть">{icons.minimize}</WindowButton>
        <WindowButton aria-label="Восстановить">{icons.restore}</WindowButton>
        <WindowButton aria-label="Закрыть">{icons.close}</WindowButton>
      </TitleBar>
      <MenuBar>
        {icons.mdi}
        <MenuItems>
          {menu.map(item => <button key={item}>{item}</button>)}
        </MenuItems>
        <MdiButtons>
          <MdiButton aria-label="Свернуть график"><svg width="6" height="6"><path d="M0 5h6" stroke="#567" strokeWidth="2" /></svg></MdiButton>
          <MdiButton aria-label="Восстановить график"><svg width="8" height="8" fill="none" stroke="#567"><rect x=".5" y="3.500" width="4" height="3" /><path d="M2.500 2.500V1h5v4H6M2.500 1.500h5" /></svg></MdiButton>
          <MdiButton aria-label="Закрыть график"><SmallX color="#567" /></MdiButton>
        </MdiButtons>
      </MenuBar>
      <Toolbars />
      <Workspace>
        <MarketWatchPanel />
        <ChartPane>
          <Chart />
          <TabRow $height={17}>
            <Tab $pad={11}>EURUSD,H4</Tab>
            <Tab $active>EURUSD,M15</Tab>
            <TabScroll>
              <svg width="4" height="6"><path d="M3 0v6L0 3z" fill="#888" /></svg>
              <svg width="4" height="6"><path d="M0 0v6l3-3z" fill="#888" /></svg>
            </TabScroll>
          </TabRow>
        </ChartPane>
      </Workspace>
      <TerminalPanel />
      <Status />
      <WindowsTaskBar />
    </Screen>
  )
}
